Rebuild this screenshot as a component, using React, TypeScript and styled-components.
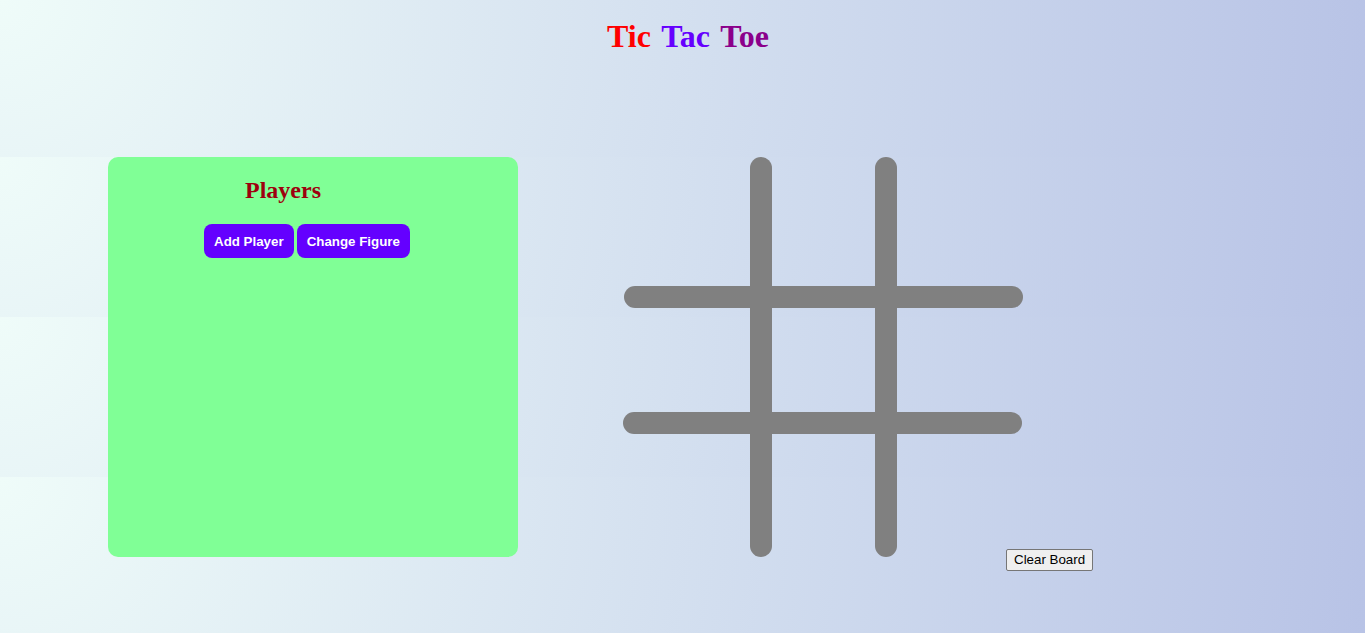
import React from "react";
import styled, { createGlobalStyle } from "styled-components";

const GlobalStyle = createGlobalStyle`
  html {
    background: radial-gradient(circle at top left, #effcf9 0%, #b8c3e6 100%);
    background-size: 100% 160px;
    background-position: 0 -3px;
    background-repeat: repeat;
  }
  body {
    margin: 0;
    font-family: "Liberation Serif", "Times New Roman", serif;
  }
`;

const Page = styled.div`
  min-height: 100vh;
  display: flex;
  flex-direction: column;
`;

const Title = styled.h1`
  margin: 0;
  padding: 18px 0 0 11px;
  text-align: center;
  font-family: "Liberation Serif", "Times New Roman", serif;
  font-weight: bold;
  font-size: 32px;
  word-spacing: 3px;
`;

const Word = styled.span<{ $color: string }>`
  color: ${(p) => p.$color};
`;

const Main = styled.main`
  display: flex;
  align-items: flex-start;
  margin-top: 102px;
`;

const PlayersCard = styled.section`
  margin-left: 108px;
  width: 410px;
  height: 400px;
  background: #80ff96;
  border-radius: 10px;
  display: flex;
  flex-direction: column;
  align-items: flex-start;
  overflow: hidden;
`;

const CardTitle = styled.h2`
  margin: 20px 0 0 137px;
  font-family: "Liberation Serif", "Times New Roman", serif;
  font-weight: bold;
  font-size: 24px;
  line-height: 26.5px;
  color: #9e000e;
`;

const ButtonRow = styled.div`
  display: flex;
  gap: 3px;
  margin: 20px 0 0 96px;
`;

const ActionButton = styled.button`
  border: none;
  border-radius: 8px;
  background: #6400ff;
  color: #ffffff;
  font-family: "Liberation Sans", Arial, sans-serif;
  font-weight: bold;
  font-size: 13.333px;
  line-height: 15px;
  padding: 10px 10px 9px;
  cursor: pointer;
`;

const Board = styled.div`
  margin-left: 105px;
  width: 400px;
  height: 400px;
  flex-shrink: 0;
`;

const ClearButton = styled.button`
  align-self: flex-end;
  margin: 0 0 -14px -17px;
  font-family: "Liberation Sans", Arial, sans-serif;
  font-size: 13.333px;
  line-height: 15px;
  padding: 2px 7px 3px;
  background: #efefef;
  color: #000;
  border: 1px solid #767676;
  border-radius: 2px;
  position: relative;
`;

const lines = [
  { x: 127, y: 0, w: 22, h: 400 },
  { x: 252, y: 0, w: 22, h: 400 },
  { x: 1, y: 129, w: 399, h: 22 },
  { x: 0, y: 255, w: 399, h: 22 },
];

export default function App() {
  return (
    <>
      <GlobalStyle />
      <Page>
        <Title>
          <Word $color="#ff0000">Tic</Word> <Word $color="#6600ff">Tac</Word>{" "}
          <Word $color="#8b008b">Toe</Word>
        </Title>
        <Main>
          <PlayersCard>
            <CardTitle>Players</CardTitle>
            <ButtonRow>
              <ActionButton>Add Player</ActionButton>
              <ActionButton>Change Figure</ActionButton>
            </ButtonRow>
          </PlayersCard>
          <Board>
            <svg width="400" height="400" viewBox="0 0 400 400">
              {lines.map((l, i) => (
                <rect
                  key={i}
                  x={l.x}
                  y={l.y}
                  width={l.w}
                  height={l.h}
                  rx={11}
                  ry={11}
                  fill="#808080"
                />
              ))}
            </svg>
          </Board>
          <ClearButton>Clear Board</ClearButton>
        </Main>
      </Page>
    </>
  );
}
